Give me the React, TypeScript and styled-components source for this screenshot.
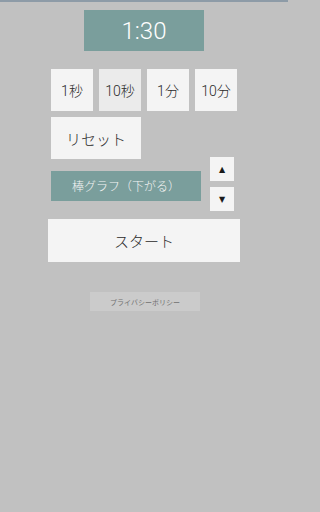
import React from "react";
import styled, { createGlobalStyle } from "styled-components";

// Types -------------------------------------------------------------------------

interface KeyProps {
  $active?: boolean;
}

const steps = ["1秒", "10秒", "1分", "10分"];

// Component ---------------------------------------------------------------------
const App: React.FC = () => {
  return (
    <>
      <GlobalStyle />
      <Screen>
        <TopBar />
        <Page>
          <Timer>1:30</Timer>
          <Controls>
            <KeyRow>
              {steps.map((s, i) => (
                <Key key={s} $active={i === 1}>
                  {s}
                </Key>
              ))}
            </KeyRow>
            <Reset>リセット</Reset>
            <ModeRow>
              <Mode>棒グラフ（下がる）</Mode>
              <Arrows>
                <Arrow>▲</Arrow>
                <Arrow>▼</Arrow>
              </Arrows>
            </ModeRow>
          </Controls>
          <Start>スタート</Start>
          <Privacy>プライバシーポリシー</Privacy>
        </Page>
      </Screen>
    </>
  );
};

export default App;

// Styled ------------------------------------------------------------------------

const GlobalStyle = createGlobalStyle`
  html, body {
    margin: 0;
    padding: 0;
    background: #c1c1c1;
    font-family: Roboto, "Noto Sans CJK JP", sans-serif;
  }
`;

const Screen = styled.div`
  width: 288px;
  height: 512px;
  background: #c1c1c1;
`;

const TopBar = styled.div`
  height: 2px;
  background: #8d9ba7;
`;

const Page = styled.div`
  display: flex;
  flex-direction: column;
  align-items: center;
  padding-top: 8px;
`;

const Timer = styled.div`
  width: 120px;
  height: 41px;
  background: #7a9e9c;
  color: #fff;
  font-size: 24px;
  font-weight: 300;
  display: flex;
  align-items: center;
  justify-content: center;
`;

const Controls = styled.div`
  width: 186px;
  margin-top: 18px;
  display: flex;
  flex-direction: column;
`;

const KeyRow = styled.div`
  display: grid;
  grid-template-columns: repeat(4, 42px);
  gap: 6px;
`;

const Key = styled.div<KeyProps>`
  height: 42px;
  background: ${({ $active }) => ($active ? "#ebebeb" : "#f4f4f4")};
  color: #2a2a2a;
  font-size: 14px;
  font-weight: 300;
  display: flex;
  align-items: center;
  justify-content: center;
`;

const Reset = styled.div`
  width: 90px;
  height: 42px;
  margin-top: 6px;
  background: #f4f4f4;
  color: #2a2a2a;
  font-size: 15px;
  font-weight: 300;
  display: flex;
  align-items: center;
  justify-content: center;
`;

const ModeRow = styled.div`
  display: flex;
  align-items: center;
  gap: 9px;
  margin-top: -2px;
`;

const Mode = styled.div`
  width: 150px;
  height: 30px;
  margin-top: 3px;
  background: #7a9e9c;
  color: #f4f4f4;
  font-size: 12px;
  font-weight: 300;
  display: flex;
  align-items: center;
  justify-content: center;
`;

const Arrows = styled.div`
  display: flex;
  flex-direction: column;
  gap: 6px;
`;

const Arrow = styled.div`
  width: 24px;
  height: 24px;
  background: #f4f4f4;
  color: #1a1a1a;
  font-size: 8px;
  display: flex;
  align-items: center;
  justify-content: center;
  font-family: "DejaVu Sans", sans-serif;
`;

const Start = styled.div`
  width: 192px;
  height: 43px;
  margin-top: 8px;
  background: #f4f4f4;
  color: #2a2a2a;
  font-size: 15px;
  font-weight: 300;
  display: flex;
  align-items: center;
  justify-content: center;
`;

const Privacy = styled.div`
  width: 110px;
  height: 19px;
  margin-top: 30px;
  margin-left: 2px;
  background: #cbcbcb;
  color: #707070;
  font-size: 7px;
  display: flex;
  align-items: center;
  justify-content: center;
`;
